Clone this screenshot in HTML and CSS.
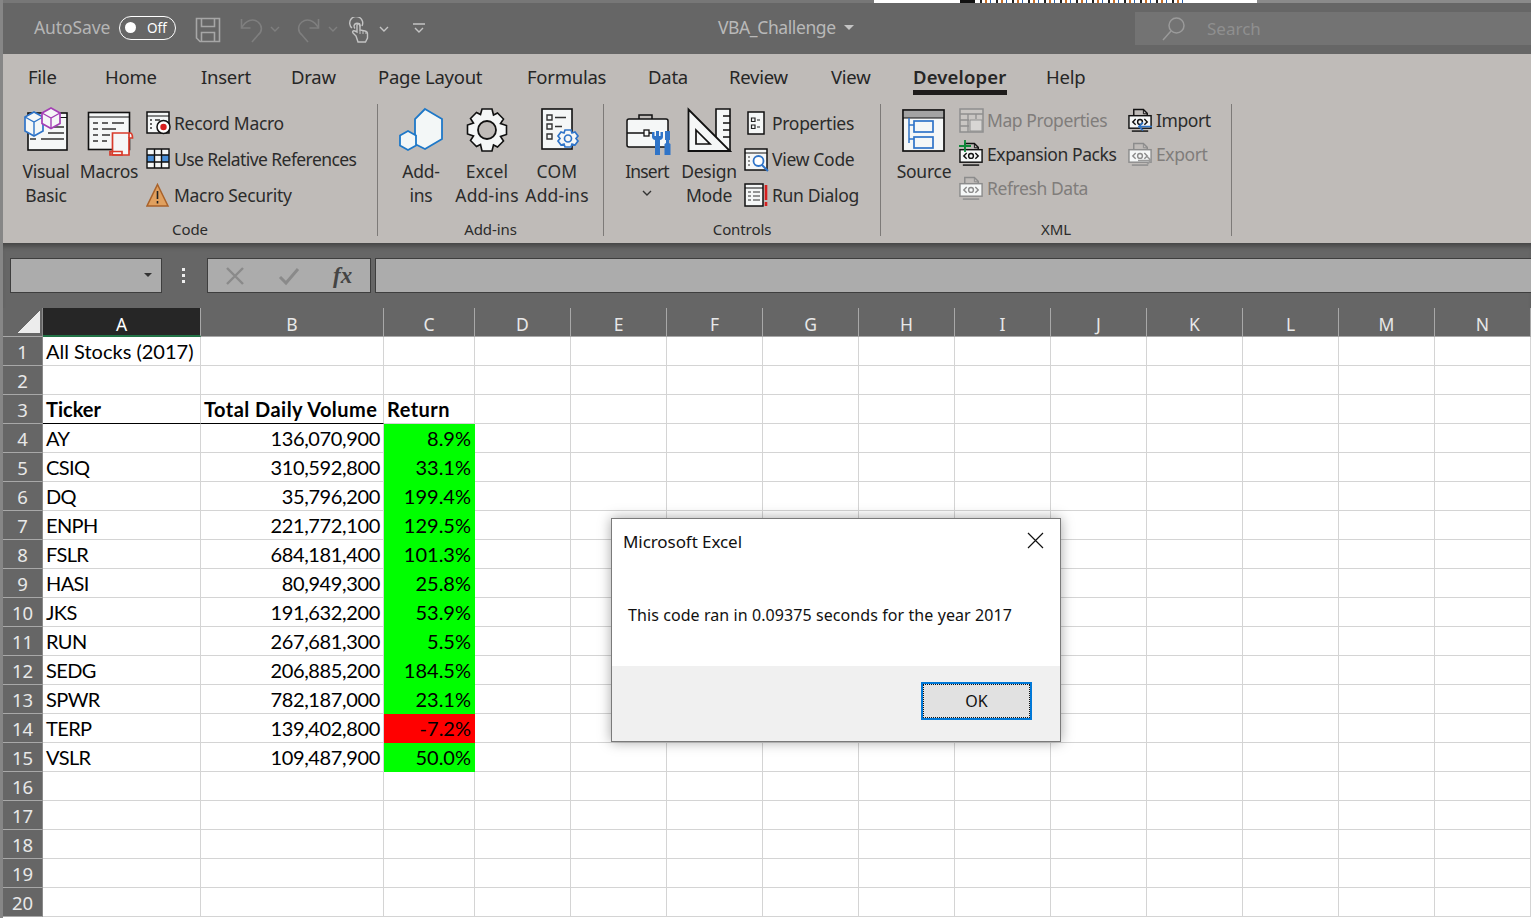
FILE: index.html
```html
<!DOCTYPE html>
<html lang="en">
<head>
<meta charset="utf-8">
<title>VBA_Challenge - Excel</title>
<link rel="stylesheet" href="styles.css">
</head>
<body>
<svg class="defs" width="0" height="0" aria-hidden="true">
  <defs>
    <symbol id="xmlpage" viewBox="0 0 26 26">
      <path d="M6 8V1.5h10l4 4V8" fill="none" stroke="currentColor" stroke-width="1.5"/>
      <path d="M16 1.5V6h4" fill="none" stroke="currentColor" stroke-width="1"/>
      <rect x="1" y="8" width="23" height="13" fill="#f5f7f7" stroke="currentColor" stroke-width="1.5"/>
      <path d="M8 11.5l-3 3 3 3M17 11.5l3 3-3 3" fill="none" stroke="currentColor" stroke-width="1.5"/>
      <circle cx="12.5" cy="14.5" r="2.5" fill="none" stroke="currentColor" stroke-width="1.5"/>
      <path d="M4 24h17" stroke="currentColor" stroke-width="1.5"/>
    </symbol>
  </defs>
</svg>
<div class="app">
  <div class="strip"><span class="strip-g"></span><span class="strip-w"></span><span class="strip-k"></span><span class="strip-c"></span><span class="strip-e"></span></div>

  <header class="titlebar">
    <span class="autosave">AutoSave</span>
    <span class="toggle"><i class="knob"></i><span class="off">Off</span></span>
    <svg class="qa qa-save" width="26" height="26" viewBox="0 0 26 26" fill="none" stroke="#a6a6a6" stroke-width="1.6"><path d="M1.5 1.5h23v23H5l-3.5-3.500z"/><path d="M6.500 1.500v8h13v-8M6.500 24.500v-9h13v9"/></svg>
    <svg class="qa qa-undo" width="24" height="26" viewBox="0 0 24 26" fill="none" stroke="#7f7f7f" stroke-width="1.6"><path d="M1.500 2v9h9"/><path d="M1.500 11C6 3 13 1 18 5c5 4 4 10 0 13l-6 7"/></svg>
    <svg class="qa qa-cv1" width="10" height="6" viewBox="0 0 10 6" fill="none" stroke="#7f7f7f" stroke-width="1.400"><path d="M1 1l4 4 4-4"/></svg>
    <svg class="qa qa-redo" width="24" height="26" viewBox="0 0 24 26" fill="none" stroke="#7f7f7f" stroke-width="1.6"><path d="M22.500 2v9h-9"/><path d="M22.500 11C18 3 11 1 6 5c-5 4-4 10 0 13l6 7"/></svg>
    <svg class="qa qa-cv2" width="10" height="6" viewBox="0 0 10 6" fill="none" stroke="#7f7f7f" stroke-width="1.400"><path d="M1 1l4 4 4-4"/></svg>
    <svg class="qa qa-touch" width="20" height="26" viewBox="0 0 20 26" fill="none" stroke="#c4c4c4" stroke-width="1.400"><path d="M3 11A6.500 6.500 0 1 1 13 9"/><path d="M6 11.500a3 3 0 1 1 5-2"/><path d="M7 19l-3-3c-1-1 0-3 2-2l2 1V8c0-2 3-2 3 0v5l5 1c2 .5 2.500 1.500 2.500 3v4l-2 4H9z"/><path d="M11 13v4M14 14v3M17 15v2" stroke-width="1"/></svg>
    <svg class="qa qa-cv3" width="10" height="6" viewBox="0 0 10 6" fill="none" stroke="#c4c4c4" stroke-width="1.400"><path d="M1 1l4 4 4-4"/></svg>
    <svg class="qa qa-more" width="12" height="11" viewBox="0 0 12 11" fill="none" stroke="#c4c4c4" stroke-width="1.400"><path d="M0 1h12M2 5l4 4 4-4"/></svg>
    <span class="doc">VBA_Challenge</span>
    <i class="doc-caret"></i>
    <div class="search">
      <svg width="24" height="26" viewBox="0 0 24 26" fill="none" stroke="#9a9a9a" stroke-width="1.500"><circle cx="14.500" cy="9.500" r="7.500"/><path d="M9 15l-8 9"/></svg>
      <span>Search</span>
    </div>
  </header>

  <nav class="tabs">
    <span>File</span><span>Home</span><span>Insert</span><span>Draw</span><span>Page Layout</span><span>Formulas</span><span>Data</span><span>Review</span><span>View</span><span class="active">Developer</span><span>Help</span>
  </nav>

  <section class="ribbon">
    <div class="group g-code">
      <div class="tools">
        <div class="big w-vb">
          <svg width="48" height="48" viewBox="0 0 48 48">
            <rect x="6" y="7" width="39" height="37" fill="#f5f7f7" stroke="#111" stroke-width="1.600"/>
            <path d="M6 11.500h39" stroke="#111" stroke-width="1"/>
            <path d="M26 21h16M26 27h16M8 33h6M19 33h23" stroke="#333" stroke-width="1.300"/>
            <path d="M12 6l9 5v14l-9 5-9-5V11z" fill="#f5f7f7" stroke="#2f74c8" stroke-width="1.700"/>
            <path d="M3 11l9 5 9-5M12 16v14" fill="none" stroke="#2f74c8" stroke-width="1.400"/>
            <path d="M29 2l9 5v10.500l-9 5-9-5V7z" fill="#f5f7f7" stroke="#a43fb5" stroke-width="1.700"/>
            <path d="M20 7l9 5 9-5M29 12v10" fill="none" stroke="#a43fb5" stroke-width="1.400"/>
          </svg>
          <span>Visual<br>Basic</span>
        </div>
        <div class="big w-mac">
          <svg class="tall" width="50" height="50" viewBox="0 0 50 50">
            <rect x="4.500" y="6.500" width="41" height="37" fill="#f5f7f7" stroke="#111" stroke-width="1.600"/>
            <path d="M4.500 11h41" stroke="#111" stroke-width="1"/>
            <path d="M9 17h5M18 17h6M28 17h12M9 23h5M18 23h14M9 29h5M18 29h8M9 35h5M18 35h5" stroke="#333" stroke-width="1.300"/>
            <path d="M29 27h17c2 0 2.500 1.500 2.500 5h-3.500v17H30c-3 0-1.500-3-1.500-3v-19z" fill="#f5f7f7" stroke="#d83b2b" stroke-width="1.700"/>
            <path d="M26 45.500h12v3.500H26zM45 32v-5" fill="none" stroke="#d83b2b" stroke-width="1.700"/>
          </svg>
          <span>Macros</span>
        </div>
        <div class="smalls">
          <div class="sm">
            <svg width="25" height="25" viewBox="0 0 25 25">
              <rect x="1" y="1" width="22" height="21" fill="#f5f7f7" stroke="#111" stroke-width="1.500"/>
              <path d="M1 5h22" stroke="#111"/>
              <path d="M4 9h2M4 13h2M4 17h2M9 9h5" stroke="#333" stroke-width="1.300"/>
              <circle cx="17.500" cy="16" r="6.500" fill="#fff" stroke="#111" stroke-width="1.500"/>
              <circle cx="17.500" cy="16" r="3.200" fill="#d81e1e"/>
            </svg>
            <span>Record Macro</span>
          </div>
          <div class="sm">
            <svg width="25" height="25" viewBox="0 0 25 25">
              <rect x="1" y="2" width="22" height="19" fill="#f5f7f7"/>
              <rect x="1" y="8" width="22" height="7" fill="#4a8fd8"/>
              <rect x="9" y="8" width="6" height="7" fill="#f5f7f7"/>
              <path d="M1 2h22v19H1zM1 8h22M1 15h22M8.500 2v19M15.500 2v19" fill="none" stroke="#111" stroke-width="1.400"/>
            </svg>
            <span class="tight">Use Relative References</span>
          </div>
          <div class="sm">
            <svg width="25" height="25" viewBox="0 0 25 25">
              <path d="M11.500 1.500L22 23H1z" fill="#e0a05f" stroke="#a9622a" stroke-width="1.500"/>
              <path d="M11.500 8v8M11.500 18v2.500" stroke="#222" stroke-width="1.600"/>
            </svg>
            <span>Macro Security</span>
          </div>
        </div>
      </div>
      <div class="glabel">Code</div>
    </div>

    <div class="group g-addins">
      <div class="tools">
        <div class="big w-add">
          <svg width="46" height="48" viewBox="0 0 46 48">
            <path d="M27 3l17 10v20L27 43l-10-5V13z" fill="#f3f7f7" stroke="#1e78c8" stroke-width="1.800"/>
            <path d="M10 25l8 4.500v10L10 44l-8-4.500v-10z" fill="#f3f7f7" stroke="#1e78c8" stroke-width="1.800"/>
          </svg>
          <span>Add-<br>ins</span>
        </div>
        <div class="big w-xl">
          <svg width="46" height="48" viewBox="0 0 46 48">
            <path d="M18 4h10l1.500 6 4-2 6 6-3 4.500 6 2v9l-6 2 3 4.500-6 6-4-2L28 46H18l-1.500-6.500-4 2-6-6 3-4.500-6-2v-9l6-2-3-4.500 6-6 4 2z" transform="translate(0 -1)" fill="#f5f7f7" stroke="#111" stroke-width="1.600"/>
            <circle cx="23" cy="24" r="9" fill="#bfbbb8" stroke="#111" stroke-width="1.800"/>
          </svg>
          <span>Excel<br>Add-ins</span>
        </div>
        <div class="big w-com">
          <svg width="46" height="48" viewBox="0 0 46 48">
            <rect x="8" y="3" width="30" height="40" fill="#f5f7f7" stroke="#111" stroke-width="1.600"/>
            <path d="M13 9h5v5h-5zM13 18h5v5h-5zM13 28h5v5h-5z" fill="none" stroke="#333" stroke-width="1.400"/>
            <path d="M21 11.500h11M21 20.500h7" stroke="#333" stroke-width="1.400"/>
            <path d="M31 24h6l1 3 3-1 3 4-2 2.500 2 2.500-3 4-3-1-1 3h-6l-1-3-3 1-3-4 2-2.500-2-2.500 3-4 3 1z" fill="#f5f7f7" stroke="#2f74c8" stroke-width="1.700"/>
            <circle cx="34" cy="32.500" r="3.500" fill="none" stroke="#2f74c8" stroke-width="1.700"/>
          </svg>
          <span>COM<br>Add-ins</span>
        </div>
      </div>
      <div class="glabel">Add-ins</div>
    </div>

    <div class="group g-ctrl">
      <div class="tools">
        <div class="big w-ins">
          <svg class="tall" width="50" height="50" viewBox="0 0 50 50">
            <path d="M17 13V9h13v4" fill="none" stroke="#111" stroke-width="1.500"/>
            <rect x="5" y="13" width="41" height="28" rx="2" fill="#f5f7f7" stroke="#111" stroke-width="1.500"/>
            <path d="M5 27h17M27 27h5" stroke="#111" stroke-width="1.500"/>
            <rect x="22" y="24" width="5" height="6" fill="#f5f7f7" stroke="#111" stroke-width="1.300"/>
            <path d="M30 26v5c0 2 2 3 3 3v15h5V34c1 0 3-1 3-3v-5h-2.500v4h-1.500v-5h-3v5h-1.500v-4z" fill="#2f74c8"/>
            <path d="M43 25h5v9h-1v3l1.500 1v11h-6V38l1.500-1v-3h-1z" fill="#2f74c8"/>
          </svg>
          <span class="narrow">Insert</span>
          <svg class="chev" width="10" height="6" viewBox="0 0 10 6" fill="none" stroke="#333" stroke-width="1.400"><path d="M1 1l4 4 4-4"/></svg>
        </div>
        <div class="big w-des">
          <svg width="46" height="48" viewBox="0 0 46 48">
            <path d="M30 3h14v42H30z" fill="#f5f7f7" stroke="#111" stroke-width="1.600"/>
            <path d="M37 10h7M37 17h7M37 24h7M37 31h7" stroke="#111" stroke-width="1.400"/>
            <path d="M2.500 3.500L44 45H2.500z" fill="#f5f7f7" stroke="#111" stroke-width="1.800"/>
            <path d="M10 24l14 14H10z" fill="none" stroke="#111" stroke-width="1.700"/>
          </svg>
          <span>Design<br>Mode</span>
        </div>
        <div class="smalls s-ctrl">
          <div class="sm">
            <svg width="25" height="25" viewBox="0 0 25 25">
              <rect x="4" y="1" width="16" height="22" fill="#f5f7f7" stroke="#111" stroke-width="1.500"/>
              <path d="M7.500 7h3.500v3.500H7.500zM7.500 14h3.500v3.500H7.500z" fill="none" stroke="#222" stroke-width="1.200"/>
              <path d="M13 9h3M13 16h3" stroke="#222" stroke-width="1.200"/>
            </svg>
            <span>Properties</span>
          </div>
          <div class="sm">
            <svg width="25" height="25" viewBox="0 0 25 25">
              <rect x="1" y="2" width="22" height="21" fill="#f5f7f7" stroke="#111" stroke-width="1.500"/>
              <path d="M1 6h22" stroke="#111"/>
              <path d="M4 10h2M4 14h2M4 18h2" stroke="#333" stroke-width="1.200"/>
              <circle cx="14.500" cy="14" r="5" fill="#fff" stroke="#2f74c8" stroke-width="1.800"/>
              <path d="M18 18l6 6" stroke="#2f74c8" stroke-width="2"/>
            </svg>
            <span>View Code</span>
          </div>
          <div class="sm">
            <svg width="25" height="25" viewBox="0 0 25 25">
              <rect x="1" y="1" width="18" height="22" fill="#f5f7f7" stroke="#111" stroke-width="1.500"/>
              <path d="M1 5h18" stroke="#111"/>
              <path d="M4 9h3M9 9h7M4 13h3M9 13h7M4 17h3M9 17h7" stroke="#333" stroke-width="1.200"/>
              <path d="M22 2v15M22 19v4" stroke="#d81e1e" stroke-width="2.600"/>
            </svg>
            <span>Run Dialog</span>
          </div>
        </div>
      </div>
      <div class="glabel">Controls</div>
    </div>

    <div class="group g-xml">
      <div class="tools">
        <div class="big w-src">
          <svg width="46" height="48" viewBox="0 0 46 48">
            <rect x="2" y="4" width="41" height="41" fill="#f5f7f7" stroke="#111" stroke-width="1.700"/>
            <rect x="3" y="5" width="39" height="7" fill="#a3a3a3"/>
            <path d="M2 12h41" stroke="#111" stroke-width="1"/>
            <path d="M8 12v25M8 19h5M8 33h5" fill="none" stroke="#2f74c8" stroke-width="1.500"/>
            <rect x="13" y="15" width="19" height="11" fill="none" stroke="#2f74c8" stroke-width="1.700"/>
            <rect x="13" y="31" width="19" height="11" fill="none" stroke="#2f74c8" stroke-width="1.700"/>
          </svg>
          <span>Source</span>
        </div>
        <div class="xcol">
          <div class="sm x off-item">
            <svg width="25" height="25" viewBox="0 0 25 25">
              <path d="M1 1h23v23H1z" fill="#c9c6c3" stroke="#8f8f8f" stroke-width="1.500"/>
              <path d="M1 6h23M1 12h9M1 18h9M9 6v18M17 6v5" fill="none" stroke="#8f8f8f" stroke-width="1.300"/>
              <rect x="11" y="12" width="12" height="11" fill="#d8d6d4" stroke="#8f8f8f"/>
            </svg>
            <span>Map Properties</span>
          </div>
          <div class="sm x">
            <svg class="ink" width="25" height="25"><use href="#xmlpage"/></svg>
            <svg class="plus" width="12" height="12" viewBox="0 0 12 12"><path d="M6 0v12M0 6h12" stroke="#0e8a3a" stroke-width="1.800"/></svg>
            <span>Expansion Packs</span>
          </div>
          <div class="sm x off-item">
            <svg class="gray" width="25" height="25"><use href="#xmlpage"/></svg>
            <span>Refresh Data</span>
          </div>
        </div>
        <div class="xcol xcol2">
          <div class="sm x">
            <svg class="ink" width="25" height="25"><use href="#xmlpage"/></svg>
            <svg class="arrow" width="14" height="9" viewBox="0 0 14 9" fill="none" stroke="#2f74c8" stroke-width="1.600"><path d="M14 4.500H1M5 .5l-4 4 4 4"/></svg>
            <span>Import</span>
          </div>
          <div class="sm x off-item">
            <svg class="gray" width="25" height="25"><use href="#xmlpage"/></svg>
            <svg class="arrow" width="14" height="9" viewBox="0 0 14 9" fill="none" stroke="#9a9a9a" stroke-width="1.600"><path d="M0 4.500h13M9 .5l4 4-4 4"/></svg>
            <span>Export</span>
          </div>
        </div>
      </div>
      <div class="glabel">XML</div>
    </div>
  </section>

  <section class="formula">
    <div class="namebox"><i class="nb-caret"></i></div>
    <div class="grip"><i></i><i></i><i></i></div>
    <div class="fxbox">
      <svg width="20" height="20" viewBox="0 0 20 20" fill="none" stroke="#8a8a8a" stroke-width="2.400"><path d="M2 2l16 16M18 2L2 18"/></svg>
      <svg class="check" width="22" height="20" viewBox="0 0 22 20" fill="none" stroke="#8a8a8a" stroke-width="3"><path d="M2 11l6 6L20 3"/></svg>
      <span class="fx">fx</span>
    </div>
    <div class="fbar"></div>
  </section>

  <section class="sheet">
    <div class="hdr">
      <div class="corner"><i></i></div>
      <div class="ch ca sel">A</div><div class="ch cb">B</div><div class="ch cc">C</div>
      <div class="ch">D</div><div class="ch">E</div><div class="ch">F</div><div class="ch">G</div><div class="ch">H</div><div class="ch">I</div><div class="ch">J</div><div class="ch">K</div><div class="ch">L</div><div class="ch">M</div><div class="ch">N</div>
    </div>
    <div class="row"><div class="rh">1</div><div class="c ca">All Stocks (2017)</div><div class="c cb"></div><div class="c cc"></div><div class="rest"></div></div>
    <div class="row"><div class="rh">2</div><div class="c ca"></div><div class="c cb"></div><div class="c cc"></div><div class="rest"></div></div>
    <div class="row"><div class="rh">3</div><div class="c ca bold under">Ticker</div><div class="c cb bold under wide">Total Daily Volume</div><div class="c cc bold wide">Return</div><div class="rest"></div></div>
    <div class="row"><div class="rh">4</div><div class="c ca sym">AY</div><div class="c cb num">136,070,900</div><div class="c cc num up">8.9%</div><div class="rest"></div></div>
    <div class="row"><div class="rh">5</div><div class="c ca sym">CSIQ</div><div class="c cb num">310,592,800</div><div class="c cc num up">33.1%</div><div class="rest"></div></div>
    <div class="row"><div class="rh">6</div><div class="c ca sym">DQ</div><div class="c cb num">35,796,200</div><div class="c cc num up">199.4%</div><div class="rest"></div></div>
    <div class="row"><div class="rh">7</div><div class="c ca sym">ENPH</div><div class="c cb num">221,772,100</div><div class="c cc num up">129.5%</div><div class="rest"></div></div>
    <div class="row"><div class="rh">8</div><div class="c ca sym">FSLR</div><div class="c cb num">684,181,400</div><div class="c cc num up">101.3%</div><div class="rest"></div></div>
    <div class="row"><div class="rh">9</div><div class="c ca sym">HASI</div><div class="c cb num">80,949,300</div><div class="c cc num up">25.8%</div><div class="rest"></div></div>
    <div class="row"><div class="rh">10</div><div class="c ca sym">JKS</div><div class="c cb num">191,632,200</div><div class="c cc num up">53.9%</div><div class="rest"></div></div>
    <div class="row"><div class="rh">11</div><div class="c ca sym">RUN</div><div class="c cb num">267,681,300</div><div class="c cc num up">5.5%</div><div class="rest"></div></div>
    <div class="row"><div class="rh">12</div><div class="c ca sym">SEDG</div><div class="c cb num">206,885,200</div><div class="c cc num up">184.5%</div><div class="rest"></div></div>
    <div class="row"><div class="rh">13</div><div class="c ca sym">SPWR</div><div class="c cb num">782,187,000</div><div class="c cc num up">23.1%</div><div class="rest"></div></div>
    <div class="row"><div class="rh">14</div><div class="c ca sym">TERP</div><div class="c cb num">139,402,800</div><div class="c cc num down">-7.2%</div><div class="rest"></div></div>
    <div class="row"><div class="rh">15</div><div class="c ca sym">VSLR</div><div class="c cb num">109,487,900</div><div class="c cc num up">50.0%</div><div class="rest"></div></div>
    <div class="row"><div class="rh">16</div><div class="c ca"></div><div class="c cb"></div><div class="c cc"></div><div class="rest"></div></div>
    <div class="row"><div class="rh">17</div><div class="c ca"></div><div class="c cb"></div><div class="c cc"></div><div class="rest"></div></div>
    <div class="row"><div class="rh">18</div><div class="c ca"></div><div class="c cb"></div><div class="c cc"></div><div class="rest"></div></div>
    <div class="row"><div class="rh">19</div><div class="c ca"></div><div class="c cb"></div><div class="c cc"></div><div class="rest"></div></div>
    <div class="row"><div class="rh">20</div><div class="c ca"></div><div class="c cb"></div><div class="c cc"></div><div class="rest"></div></div>
  </section>

  <div class="dialog" role="dialog">
    <div class="d-body">
      <div class="d-head">
        <span class="d-title">Microsoft Excel</span>
        <svg width="17" height="17" viewBox="0 0 17 17" fill="none" stroke="#111" stroke-width="1.200"><path d="M1 1l15 15M16 1L1 16"/></svg>
      </div>
      <p class="d-msg">This code ran in 0.09375 seconds for the year 2017</p>
    </div>
    <div class="d-foot"><div class="d-btn"><span>OK</span></div></div>
  </div>
</div>
</body>
</html>
```

FILE: styles.css
```css
* { box-sizing: border-box; }
html, body { margin: 0; height: 100%; overflow: hidden; background: #666; }
.defs { position: absolute; }
.app {
  position: relative;
  width: 1531px;
  height: 918px;
  overflow: hidden;
  border-left: 3px solid #868686;
  font-family: "Noto Sans", "Open Sans", sans-serif;
  display: flex;
  flex-direction: column;
}

/* thin band of another window above the title bar */
.strip { height: 3px; margin-left: -3px; background: #8a8a8a; display: flex; flex: none; }
.strip-g { width: 874px; background: #777; }
.strip-w { width: 86px; background: #fff; }
.strip-k { width: 15px; background: #111; }
.strip-c { width: 208px; background: repeating-linear-gradient(90deg, #fff 0 5px, #222 5px 7px, #fff 7px 10px, #c8702a 10px 12px, #fff 12px 15px, #2a60a8 15px 16px); }
.strip-e { width: 74px; background: #fff; }

/* title bar */
.titlebar { height: 51px; flex: none; background: #666; display: flex; align-items: center; padding-left: 31px; color: #bdbdbd; }
.autosave { font-size: 17.5px; width: 85px; flex: none; letter-spacing: -.1px; color: #b5b5b5; margin-bottom: 4px; }
.toggle { width: 57px; height: 24px; flex: none; border: 1.5px solid #fff; border-radius: 12px; display: flex; align-items: center; padding-left: 5px; margin-bottom: 2px; }
.knob { width: 11px; height: 11px; border-radius: 50%; background: #fff; flex: none; }
.off { font-size: 13.5px; color: #fff; margin-left: 11px; }
.qa { flex: none; }
.qa-save { margin-left: 19px; margin-top: 3px; }
.qa-undo { margin-left: 19px; margin-top: 3px; }
.qa-cv1 { margin-left: 6px; }
.qa-redo { margin-left: 16px; margin-top: 3px; }
.qa-cv2 { margin-left: 8px; }
.qa-touch { margin-left: 11px; margin-top: 3px; }
.qa-cv3 { margin-left: 10px; }
.qa-more { margin-left: 24px; }
.doc { font-size: 17.5px; margin-left: 293px; width: 120px; flex: none; letter-spacing: -.4px; color: #b9b9b9; margin-bottom: 4px; }
.doc-caret { border: 5px solid transparent; border-top: 5px solid #c4c4c4; border-bottom: 0; margin-left: 6px; margin-bottom: 3px; }
.search { margin-left: 281px; width: 400px; height: 33px; background: #737373; display: flex; align-items: center; padding-left: 27px; gap: 21px; flex: none; }
.search span { font-size: 17px; color: #8f8f8f; }

/* tabs */
.tabs {
  height: 46px; flex: none; background: #bfbbb8; padding-left: 25px; padding-bottom: 2px;
  display: grid; align-items: center; grid-template-columns: 77px 96px 90px 87px 149px 121px 81px 102px 82px 133px 60px;
  font-size: 18.5px; color: #262626; letter-spacing: -.25px;
}
.tabs .active { font-weight: 600; position: relative; width: 94px; white-space: nowrap; letter-spacing: .17px; }
.tabs .active::after { content: ""; position: absolute; left: 0; right: 0; bottom: -6px; height: 5px; background: #1e1c1b; }

/* ribbon */
.ribbon { height: 143px; flex: none; background: #bfbbb8; display: flex; align-items: stretch; padding-top: 4px; padding-bottom: 7px; color: #2b2b2b; }
.group { display: flex; flex-direction: column; border-right: 1px solid #7d7a78; flex: none; }
.g-code { width: 375px; padding-left: 15px; }
.g-addins { width: 226px; padding-left: 8px; }
.g-ctrl { width: 277px; padding-left: 12px; }
.g-xml { width: 351px; padding-left: 12px; }
.tools { flex: 1; display: flex; align-items: flex-start; }
.glabel { text-align: center; font-size: 15px; height: 22px; line-height: 22px; letter-spacing: -.1px; margin-bottom: -4px; }
.g-code .glabel { margin-left: -15px; margin-right: 0; }
.g-addins .glabel { margin-left: -8px; }
.g-ctrl .glabel { margin-left: -12px; }
.g-xml .glabel { margin-left: -12px; }

.big { display: flex; flex-direction: column; align-items: center; text-align: center; font-size: 17.5px; line-height: 24px; letter-spacing: -.25px; flex: none; padding-top: 2px; white-space: nowrap; }
.big > span { display: block; margin-top: 5px; }
.big > svg { flex: none; }
.big > svg.tall { margin-bottom: -2px; }
.big > .narrow { letter-spacing: -.8px; }
.w-vb { width: 56px; }
.w-mac { width: 70px; }
.w-add { width: 70px; }
.w-xl { width: 62px; letter-spacing: .2px; }
.w-com { width: 78px; letter-spacing: .2px; }
.w-ins { width: 62px; }
.w-des { width: 62px; }
.w-src { width: 62px; }
.chev { margin-top: 7px; }

.smalls { display: flex; flex-direction: column; margin-left: 2px; padding-top: 1px; }
.s-ctrl { margin-left: 4px; }
.sm { height: 36px; display: flex; align-items: center; gap: 3px; font-size: 17.5px; letter-spacing: -.3px; white-space: nowrap; position: relative; }
.sm svg { flex: none; }
.sm .tight { letter-spacing: -.58px; }
.sm.x { height: 34px; letter-spacing: -.42px; }
.xcol { margin-top: -1px; display: flex; flex-direction: column; margin-left: 4px; }
.xcol2 { margin: 0; position: absolute; left: 1125px; top: 103px; }
.off-item { color: #807d7b; }
.ink { color: #111; }
.gray { color: #8c8c8c; }
.plus { position: absolute; left: 0; top: 3px; }
.arrow { position: absolute; left: 10px; top: 19px; }

/* formula bar */
.formula { height: 65px; flex: none; background: #666; display: flex; align-items: flex-start; padding-top: 15px; padding-left: 7px; box-shadow: inset 0 6px 5px -3px #444; }
.namebox { width: 152px; height: 35px; flex: none; background: #acacac; border: 1.5px solid #3e3e3e; position: relative; }
.nb-caret { position: absolute; right: 9px; top: 14px; border: 4px solid transparent; border-top: 4px solid #333; border-bottom: 0; }
.grip { width: 43px; margin-right: 2px; height: 35px; flex: none; display: flex; flex-direction: column; align-items: center; justify-content: center; gap: 3px; }
.grip i { width: 3px; height: 3px; background: #eee; }
.fxbox { width: 164px; height: 35px; flex: none; background: #acacac; border: 1.5px solid #3e3e3e; display: flex; align-items: center; padding-left: 17px; gap: 32px; }
.check { margin-left: 1px; }
.fx { font-family: "Liberation Serif", serif; font-style: italic; font-weight: 700; font-size: 23px; color: #444; line-height: 1; margin-left: 1px; }
.fbar { flex: 1; height: 35px; margin-left: 4px; background: #acacac; border: 1.5px solid #3e3e3e; border-right: 0; }

/* sheet */
.sheet { flex: 1; background: #fff; display: flex; flex-direction: column; }
.hdr { height: 29px; flex: none; display: flex; background: #666; }
.corner { width: 40px; flex: none; position: relative; border-bottom: 1px solid #a8a8a8; border-right: 1px solid #8a8a8a; }
.corner i { position: absolute; right: 2px; bottom: 3px; width: 22px; height: 22px; background: linear-gradient(to bottom right, transparent 50%, #ececec 50%); }
.ch { width: 96px; flex: none; text-align: center; font-size: 17.5px; line-height: 32px; color: #e8e8e8; border-right: 1px solid #a8a8a8; border-bottom: 1px solid #a8a8a8; }
.ch.ca { width: 158px; }
.ch.cb { width: 183px; }
.ch.cc { width: 91px; }
.ch.sel { background: #262626; color: #fff; border-bottom: 2px solid #217346; }
.row { height: 29px; flex: none; display: flex; font-family: Lato, "Noto Sans", sans-serif; font-size: 20px; color: #000; }
.rh { width: 40px; flex: none; background: #666; color: #e8e8e8; text-align: center; font-family: "Noto Sans", sans-serif; font-size: 18.5px; line-height: 29px; border-bottom: 1px solid #a8a8a8; border-right: 1px solid #8a8a8a; }
.c { flex: none; padding: 0 3px; line-height: 29px; border-right: 1px solid #d4d4d4; border-bottom: 1px solid #d4d4d4; white-space: nowrap; }
.c.ca { width: 158px; }
.c.cb { width: 183px; }
.c.cc { width: 91px; }
.bold { font-weight: 700; }
.wide { letter-spacing: .46px; }
.sym { letter-spacing: -.6px; }
.under { border-bottom-color: #000; }
.num { text-align: right; }
.cb.num { letter-spacing: -.36px; }
.up { background: #00ff00; border-color: #00ff00; }
.down { background: #ff0000; border-color: #ff0000; }
.rest { flex: 1; border-bottom: 1px solid #d4d4d4; background: repeating-linear-gradient(90deg, transparent 0 95px, #d4d4d4 95px 96px); }

/* dialog */
.dialog { position: absolute; left: 608px; top: 518px; width: 450px; height: 224px; background: #fff; border: 1px solid #7a7a7a; box-shadow: 0 0 12px rgba(0,0,0,.35); display: flex; flex-direction: column; font-family: "Noto Sans", sans-serif; color: #111; }
.d-body { flex: 1; padding: 0 16px 0 11px; }
.d-head { height: 43px; display: flex; align-items: center; justify-content: space-between; }
.d-title { font-size: 17px; letter-spacing: -.07px; margin-top: 1px; }
.d-msg { margin: 41px 0 0 5px; font-size: 16px; letter-spacing: .08px; white-space: nowrap; line-height: 24px; }
.d-foot { height: 75px; flex: none; background: #f0f0f0; padding: 16px 28px 0 0; display: flex; justify-content: flex-end; align-items: flex-start; }
.d-btn { width: 111px; height: 38px; border: 2px solid #0078d7; background: #e1e1e1; display: flex; align-items: center; justify-content: center; position: relative; font-size: 16px; }
.d-btn::after { content: ""; position: absolute; inset: 0; border: 1px dotted #111; }
```
